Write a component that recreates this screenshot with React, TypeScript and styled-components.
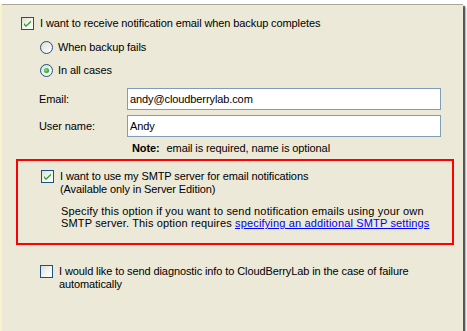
import styled, { createGlobalStyle } from 'styled-components';

const GlobalStyle = createGlobalStyle`
  html, body {
    margin: 0;
    padding: 0;
    background: #ffffff;
  }
  body {
    font-family: 'Liberation Sans', Arial, sans-serif;
    font-size: 11px;
    letter-spacing: -0.1px;
    color: #000000;
  }
`;

const Frame = styled.div`
  box-sizing: border-box;
  width: 463px;
  height: 327px;
  background: #ece9d8;
  border-left: 2px solid #f7f3cf;
  box-shadow: 2px 2px 1px rgba(0, 0, 0, 0.55), 3px 3px 2px rgba(0, 0, 0, 0.25);
`;

const TopRule = styled.div`
  margin-top: 4px;
  border-top: 1px solid #aca899;
`;

const Body = styled.div`
  display: flex;
  flex-direction: column;
  padding-left: 14px;
`;

const CheckRow = styled.div<{ $indent: number; $top: number }>`
  display: flex;
  align-items: flex-start;
  gap: 6px;
  margin-left: ${(p) => p.$indent}px;
  margin-top: ${(p) => p.$top}px;
  line-height: 13px;
`;

const RadioGroup = styled.div`
  display: flex;
  flex-direction: column;
  gap: 10px;
  margin: 11px 0 0 24px;
`;

const RadioRow = styled.div`
  display: flex;
  align-items: center;
  gap: 5px;
  line-height: 13px;
`;

const Form = styled.div`
  display: grid;
  grid-template-columns: 88px 314px;
  row-gap: 5px;
  align-items: center;
  margin: 11px 0 0 23px;
`;

const Label = styled.label`
  line-height: 13px;
`;

const Input = styled.input`
  box-sizing: border-box;
  width: 314px;
  height: 22px;
  border: 1px solid #7f9db9;
  background: #ffffff;
  padding: 0 2px;
  font: inherit;
  letter-spacing: inherit;
  color: #000000;
  outline: none;
`;

const Note = styled.div`
  margin: 5px 0 0 116px;
  line-height: 13px;

  b {
    margin-right: 4px;
  }
`;

const Highlight = styled.div`
  box-sizing: border-box;
  width: 438px;
  height: 86px;
  margin-top: 4px;
  border: 2px solid #ff0000;
  padding: 9px 0 0 23px;
`;

const Hint = styled.p`
  margin: 9px 0 0 20px;
  line-height: 12px;
  letter-spacing: 0.15px;
`;

const Link = styled.a`
  color: #0000ff;
  text-decoration: underline;
`;

function CheckBox({ checked }: { checked?: boolean }) {
  return (
    <svg width="13" height="13" viewBox="0 0 13 13" style={{ flex: 'none' }}>
      <defs>
        <linearGradient id="cbfill" x1="0" y1="0" x2="1" y2="1">
          <stop offset="0" stopColor="#dcdcd6" />
          <stop offset="0.5" stopColor="#f3f3ef" />
          <stop offset="1" stopColor="#ffffff" />
        </linearGradient>
      </defs>
      <rect x="0.5" y="0.5" width="12" height="12" fill="url(#cbfill)" stroke="#1c5180" />
      {checked && (
        <path d="M3 6 L5 8.2 L10 3.4 L10 5.2 L5 10 L3 8 Z" fill="#21a121" />
      )}
    </svg>
  );
}

function Radio({ checked }: { checked?: boolean }) {
  return (
    <svg width="13" height="13" viewBox="0 0 13 13" style={{ flex: 'none' }}>
      <defs>
        <linearGradient id="rfill" x1="0" y1="0" x2="1" y2="1">
          <stop offset="0" stopColor="#dcdcd6" />
          <stop offset="1" stopColor="#ffffff" />
        </linearGradient>
        <radialGradient id="rdot" cx="0.4" cy="0.4" r="0.6">
          <stop offset="0" stopColor="#88e088" />
          <stop offset="1" stopColor="#21a121" />
        </radialGradient>
      </defs>
      <circle cx="6.5" cy="6.5" r="6" fill="url(#rfill)" stroke="#1c5180" />
      {checked && <circle cx="6.5" cy="6.5" r="2.5" fill="url(#rdot)" />}
    </svg>
  );
}

export default function App() {
  return (
    <>
      <GlobalStyle />
      <Frame>
        <TopRule />
        <Body>
          <CheckRow $indent={5} $top={12}>
            <CheckBox checked />
            <span>I want to receive notification email when backup completes</span>
          </CheckRow>

          <RadioGroup>
            <RadioRow>
              <Radio />
              <span>When backup fails</span>
            </RadioRow>
            <RadioRow>
              <Radio checked />
              <span>In all cases</span>
            </RadioRow>
          </RadioGroup>

          <Form>
            <Label>Email:</Label>
            <Input defaultValue="andy@cloudberrylab.com" />
            <Label>User name:</Label>
            <Input defaultValue="Andy" />
          </Form>

          <Note>
            <b>Note:</b> email is required, name is optional
          </Note>

          <Highlight>
            <CheckRow $indent={0} $top={0}>
              <CheckBox checked />
              <span>
                I want to use my SMTP server for email notifications
                <br />
                (Available only in Server Edition)
              </span>
            </CheckRow>
            <Hint>
              Specify this option if you want to send notification emails using your own
              <br />
              SMTP server. This option requires{' '}
              <Link href="#">specifying an additional SMTP settings</Link>
            </Hint>
          </Highlight>

          <CheckRow $indent={24} $top={20}>
            <CheckBox />
            <span>
              I would like to send diagnostic info to CloudBerryLab in the case of failure
              <br />
              automatically
            </span>
          </CheckRow>
        </Body>
      </Frame>
    </>
  );
}
